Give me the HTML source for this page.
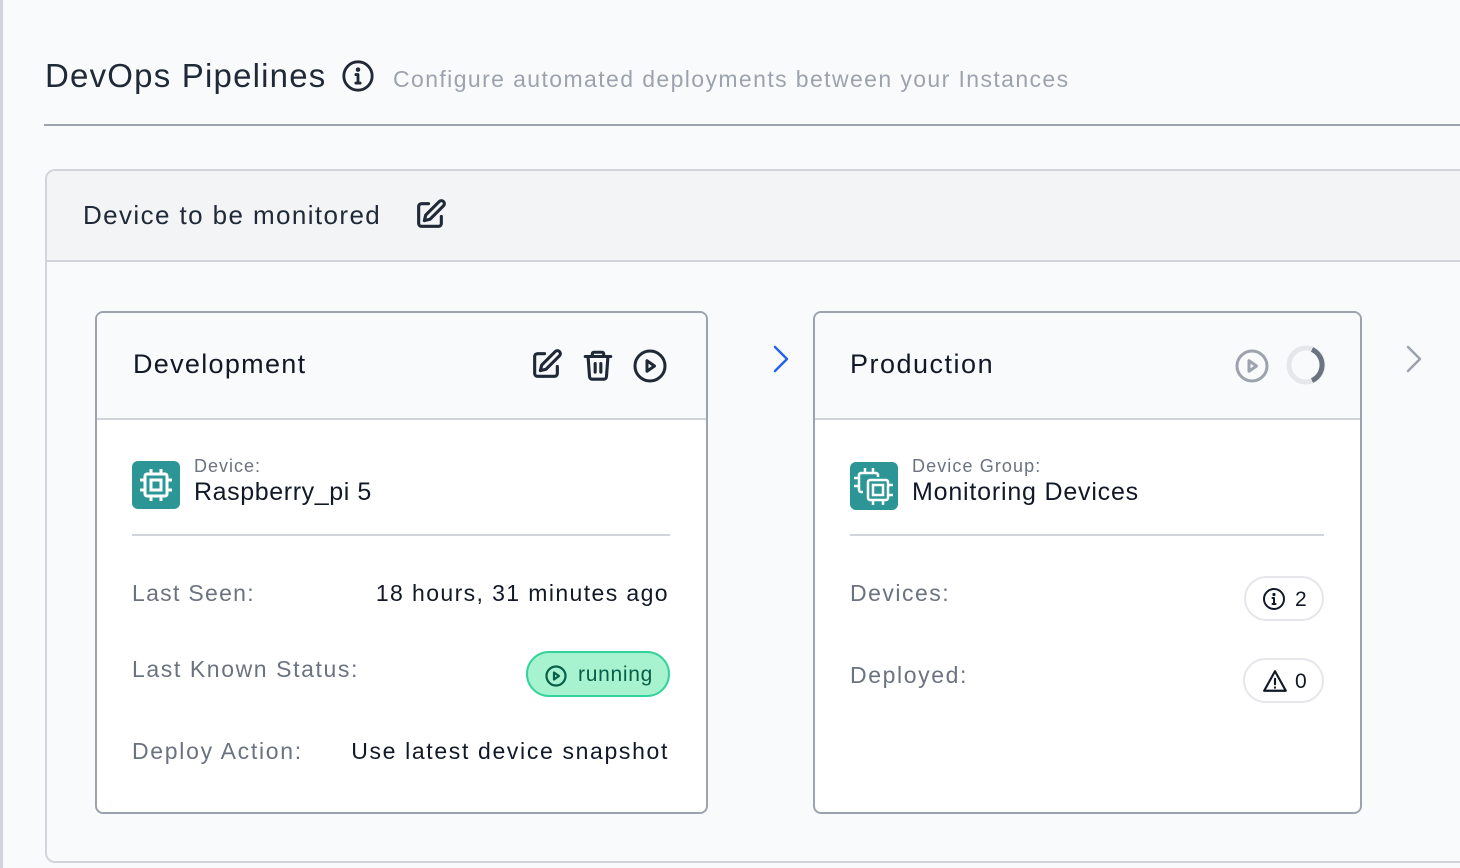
<!DOCTYPE html>
<html><head><meta charset="utf-8"><style>
*{box-sizing:border-box;margin:0;padding:0}
body{width:1460px;height:868px;background:#f9fafb;font-family:"Liberation Sans",sans-serif;color:#1f2937;position:relative;overflow:hidden}
.a{position:absolute;white-space:nowrap}
.lbl{color:#6b7280;font-size:23px;letter-spacing:1.5px}
.val{color:#111827;font-size:23px;letter-spacing:1.5px}
svg{display:block}
</style></head><body>
<div class="a" style="left:0;top:0;width:3px;height:868px;background:#d1d5db"></div>
<div class="a" style="left:45px;top:57px;font-size:33px;color:#1f2937;letter-spacing:1.2px">DevOps Pipelines</div>
<svg class="a" style="left:341px;top:59px" width="34" height="34" viewBox="0 0 24 24" fill="none" stroke="#1f2937" stroke-width="2"><circle cx="12" cy="12" r="10"/><path d="M12 11v6M10.5 11H12M10.5 17h3" stroke-linecap="round"/><circle cx="12" cy="7.5" r="0.6" fill="#1f2937"/></svg>
<div class="a" style="left:393px;top:66px;font-size:23px;color:#9ca3af;letter-spacing:1.4px">Configure automated deployments between your Instances</div>
<div class="a" style="left:44px;top:124px;width:1416px;height:2px;background:#9ca3af"></div>

<div class="a" style="left:45px;top:169px;width:1430px;height:694px;border:2px solid #d1d5db;border-radius:10px;background:#f9fafb;overflow:hidden">
 <div style="height:91px;background:#f3f4f6;border-bottom:2px solid #d1d5db"></div>
</div>
<div class="a" style="left:83px;top:200px;font-size:26px;color:#1f2937;letter-spacing:1.4px">Device to be monitored</div>
<svg class="a" style="left:413px;top:198px" width="34" height="34" viewBox="0 0 24 24" fill="none" stroke="#1f2937" stroke-width="2.2" stroke-linecap="round" stroke-linejoin="round"><path d="M11 4H6a2 2 0 0 0-2 2v12a2 2 0 0 0 2 2h12a2 2 0 0 0 2-2v-5"/><path d="M18.5 2.5a2.1 2.1 0 0 1 3 3L12 15l-4 1 1-4z"/></svg>

<!-- Development card -->
<div class="a" style="left:95px;top:311px;width:613px;height:503px;border:2px solid #9ca3af;border-radius:8px;background:#fff;overflow:hidden">
 <div style="height:107px;background:#f9fafb;border-bottom:2px solid #d1d5db"></div>
</div>
<div class="a" style="left:133px;top:349px;font-size:27px;color:#111827;letter-spacing:1.3px">Development</div>
<svg class="a" style="left:529px;top:348px" width="34" height="34" viewBox="0 0 24 24" fill="none" stroke="#1f2937" stroke-width="2.2" stroke-linecap="round" stroke-linejoin="round"><path d="M11 4H6a2 2 0 0 0-2 2v12a2 2 0 0 0 2 2h12a2 2 0 0 0 2-2v-5"/><path d="M18.5 2.5a2.1 2.1 0 0 1 3 3L12 15l-4 1 1-4z"/></svg>
<svg class="a" style="left:581px;top:348px" width="34" height="34" viewBox="0 0 24 24" fill="none" stroke="#1f2937" stroke-width="2.2" stroke-linecap="round" stroke-linejoin="round"><path d="M3 6h18M8 6V4a1 1 0 0 1 1-1h6a1 1 0 0 1 1 1v2M5 6l1 14a2 2 0 0 0 2 2h8a2 2 0 0 0 2-2l1-14M10 11v6M14 11v6"/></svg>
<svg class="a" style="left:632px;top:348px" width="36" height="36" viewBox="0 0 24 24" fill="none" stroke="#1f2937" stroke-width="2"><circle cx="12" cy="12" r="10"/><path d="M10 8.5v7l5-3.5z" stroke-linejoin="round"/></svg>

<svg class="a" style="left:132px;top:461px" width="48" height="48" viewBox="0 0 48 48"><rect width="48" height="48" rx="6" fill="#2b9695"/><g fill="none" stroke="#fff" stroke-width="3"><rect x="13" y="13" width="22" height="22" rx="2"/><rect x="19" y="19" width="10" height="10"/><path d="M19 8v5M29 8v5M19 35v5M29 35v5M8 19h5M8 29h5M35 19h5M35 29h5"/></g></svg>
<div class="a" style="left:194px;top:456px;font-size:18px;color:#6b7280;letter-spacing:1px">Device:</div>
<div class="a" style="left:194px;top:478px;font-size:25px;color:#111827;letter-spacing:0.6px">Raspberry_pi 5</div>
<div class="a" style="left:132px;top:534px;width:538px;height:2px;background:#d1d5db"></div>
<div class="a lbl" style="left:132px;top:580px;letter-spacing:1.3px">Last Seen:</div>
<div class="a val" style="right:791px;top:580px;letter-spacing:1.4px">18 hours, 31 minutes ago</div>
<div class="a lbl" style="left:132px;top:656px;letter-spacing:1.6px">Last Known Status:</div>
<div class="a" style="left:526px;top:651px;width:144px;height:46px;border:2px solid #34d399;border-radius:23px;background:#a7f3d0;color:#065f46;font-size:21px">
 <svg class="a" style="left:16px;top:11px" width="24" height="24" viewBox="0 0 24 24" fill="none" stroke="#065f46" stroke-width="2.2"><circle cx="12" cy="12" r="9.5"/><path d="M10 8.5v7l5-3.5z" stroke-linejoin="round"/></svg>
 <span class="a" style="left:50px;top:10px;letter-spacing:0.7px">running</span>
</div>
<div class="a lbl" style="left:132px;top:738px;letter-spacing:1.7px">Deploy Action:</div>
<div class="a val" style="right:791px;top:738px;letter-spacing:1.65px">Use latest device snapshot</div>

<svg class="a" style="left:770px;top:344px" width="22" height="30" viewBox="0 0 22 30" fill="none" stroke="#2563eb" stroke-width="2.5" stroke-linecap="round" stroke-linejoin="round"><path d="M5 3l12 12-12 12"/></svg>

<!-- Production card -->
<div class="a" style="left:813px;top:311px;width:549px;height:503px;border:2px solid #9ca3af;border-radius:8px;background:#fff;overflow:hidden">
 <div style="height:107px;background:#f9fafb;border-bottom:2px solid #d1d5db"></div>
</div>
<div class="a" style="left:850px;top:349px;font-size:27px;color:#111827;letter-spacing:1.5px">Production</div>
<svg class="a" style="left:1234px;top:348px" width="36" height="36" viewBox="0 0 24 24" fill="none" stroke="#9ca3af" stroke-width="2"><circle cx="12" cy="12" r="10"/><path d="M10 8.5v7l5-3.5z" stroke-linejoin="round"/></svg>
<svg class="a" style="left:1285px;top:344px" width="42" height="42" viewBox="0 0 42 42" fill="none" stroke-width="5"><circle cx="21" cy="21" r="17" stroke="#e5e7eb"/><path d="M27 5.5A17 17 0 0 1 27 36.5" stroke="#6b7280"/></svg>
<svg class="a" style="left:1403px;top:344px" width="22" height="30" viewBox="0 0 22 30" fill="none" stroke="#9ca3af" stroke-width="2.5" stroke-linecap="round" stroke-linejoin="round"><path d="M5 3l12 12-12 12"/></svg>

<svg class="a" style="left:850px;top:462px" width="48" height="48" viewBox="0 0 48 48"><rect width="48" height="48" rx="6" fill="#2b9695"/><g fill="none" stroke="#fff" stroke-width="2.5"><path d="M13 30h-2a2 2 0 0 1-2-2V13a2 2 0 0 1 2-2h15a2 2 0 0 1 2 2v2"/><rect x="18" y="18" width="20" height="20" rx="2"/><rect x="23" y="23" width="10" height="10"/><path d="M15 6v5M23 6v5M4 16h5M4 24h5M23 38v5M33 38v5M38 23h5M38 33h5"/></g></svg>
<div class="a" style="left:912px;top:456px;font-size:18px;color:#6b7280;letter-spacing:1.1px">Device Group:</div>
<div class="a" style="left:912px;top:478px;font-size:25px;color:#111827;letter-spacing:0.8px">Monitoring Devices</div>
<div class="a" style="left:850px;top:534px;width:474px;height:2px;background:#d1d5db"></div>
<div class="a lbl" style="left:850px;top:580px">Devices:</div>
<div class="a" style="left:1244px;top:576px;width:80px;height:45px;border:2px solid #e5e7eb;border-radius:23px;background:#fff">
 <svg class="a" style="left:16px;top:9px" width="24" height="24" viewBox="0 0 24 24" fill="none" stroke="#111827" stroke-width="2"><circle cx="12" cy="12" r="10"/><path d="M12 11v6M10.5 11H12M10.5 17h3" stroke-linecap="round"/><circle cx="12" cy="7.5" r="0.6" fill="#111827"/></svg>
 <span class="a" style="left:49px;top:10px;font-size:21px;color:#111827">2</span>
</div>
<div class="a lbl" style="left:850px;top:662px;letter-spacing:1.6px">Deployed:</div>
<div class="a" style="left:1243px;top:658px;width:81px;height:45px;border:2px solid #e5e7eb;border-radius:23px;background:#fff">
 <svg class="a" style="left:17px;top:8px" width="26" height="26" viewBox="0 0 24 24" fill="none" stroke="#111827" stroke-width="2" stroke-linejoin="round" stroke-linecap="round"><path d="M12 3L2 21h20z"/><path d="M12 10v5M12 18v.1"/></svg>
 <span class="a" style="left:50px;top:10px;font-size:21px;color:#111827">0</span>
</div>
</body></html>
